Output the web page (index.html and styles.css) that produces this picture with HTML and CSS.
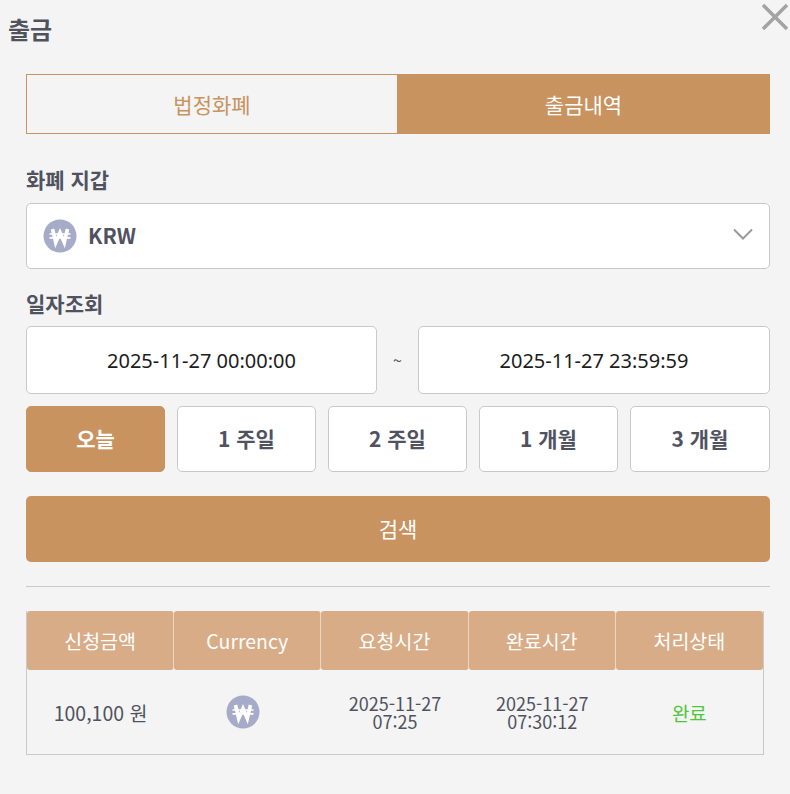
FILE: index.html
```html
<!DOCTYPE html>
<html lang="ko">
<head>
<meta charset="UTF-8">
<meta name="viewport" content="width=device-width, initial-scale=1.0">
<title>출금</title>
<link rel="stylesheet" href="styles.css">
</head>
<body>
    <svg class="defs" width="0" height="0">
        <symbol id="won" viewBox="0 0 34 34">
            <circle cx="17" cy="17" r="16.500" fill="#a6abc8"/>
            <path d="M9.500 10l3.200 13.500 4.300-10 4.300 10 3.200-13.500" fill="none" stroke="#fff" stroke-width="3.600"/>
            <path d="M6.500 15h21M6.500 18.800h21" fill="none" stroke="#fff" stroke-width="1.700"/>
        </symbol>
    </svg>

    <div class="header">
        <h1>출금</h1>
        <svg class="close" width="28" height="28" viewBox="0 0 28 28">
            <path d="M2 2l24 24M26 2L2 26" stroke="#a3a3a3" stroke-width="3.500" fill="none"/>
        </svg>
    </div>

    <div class="content">
        <div class="tabs">
            <div class="tab">법정화폐</div>
            <div class="tab active">출금내역</div>
        </div>

        <div class="label wallet-label">화폐 지갑</div>
        <div class="select">
            <svg class="coin" width="34" height="34"><use href="#won"/></svg>
            <span class="select-text">KRW</span>
            <svg class="chevron" width="20" height="12" viewBox="0 0 20 12">
                <path d="M1 1.500l9 9 9-9" stroke="#9a9a9a" stroke-width="2" fill="none"/>
            </svg>
        </div>

        <div class="label date-label">일자조회</div>
        <div class="dates">
            <div class="date">2025-11-27 00:00:00</div>
            <div class="tilde">~</div>
            <div class="date">2025-11-27 23:59:59</div>
        </div>

        <div class="ranges">
            <button class="range active">오늘</button>
            <button class="range">1 주일</button>
            <button class="range">2 주일</button>
            <button class="range">1 개월</button>
            <button class="range">3 개월</button>
        </div>

        <button class="search">검색</button>

        <hr class="divider">

        <table class="history">
            <thead>
                <tr>
                    <th>신청금액</th>
                    <th>Currency</th>
                    <th>요청시간</th>
                    <th>완료시간</th>
                    <th>처리상태</th>
                </tr>
            </thead>
            <tbody>
                <tr>
                    <td>100,100 원</td>
                    <td><svg class="coin-small" width="34" height="34"><use href="#won"/></svg></td>
                    <td class="time">2025-11-27<br>07:25</td>
                    <td class="time">2025-11-27<br>07:30:12</td>
                    <td class="done">완료</td>
                </tr>
            </tbody>
        </table>
    </div>
</body>
</html>
```

FILE: styles.css
```css
* {
    box-sizing: border-box;
}
body {
    font-family: "Noto Sans CJK KR", "Noto Sans", sans-serif;
    background: #f4f4f4;
    color: #50535f;
    margin: 0;
    padding: 0;
}
.defs {
    display: block;
    height: 0;
}
.header {
    display: flex;
    justify-content: space-between;
    padding: 0 1px 0 8px;
    height: 74px;
}
.header h1 {
    margin: 11px 0 0;
    font-size: 24px;
    line-height: 36px;
    font-weight: 700;
}
.close {
    margin-top: 3px;
}
.content {
    padding: 0 20px 0 26px;
}
.tabs {
    display: grid;
    grid-template-columns: 371px 1fr;
    height: 60px;
}
.tab {
    display: flex;
    align-items: center;
    justify-content: center;
    font-size: 21px;
    color: #c8935f;
    border: 1px solid #c8935f;
    border-right: none;
}
.tab.active {
    background: #c8935f;
    color: #fff;
    border: none;
}
.label {
    font-size: 21px;
    line-height: 28px;
    font-weight: 700;
}
.wallet-label {
    margin-top: 31px;
    height: 38px;
}
.select {
    display: flex;
    align-items: center;
    height: 66px;
    padding: 0 16px;
    background: #fff;
    border: 1px solid #c9c9c9;
    border-radius: 5px;
}
.select-text {
    margin: 0 0 2px 11px;
    font-size: 21px;
    font-weight: 700;
}
.chevron {
    margin: 0 0 4px auto;
}
.date-label {
    margin-top: 20px;
    height: 37px;
}
.dates {
    display: grid;
    grid-template-columns: 351px 41px 1fr;
    align-items: center;
    height: 68px;
}
.date {
    height: 68px;
    padding-top: 1px;
    display: flex;
    align-items: center;
    justify-content: center;
    background: #fff;
    border: 1px solid #c9c9c9;
    border-radius: 5px;
    font-family: "Noto Sans", sans-serif;
    font-size: 20px;
    color: #1c1c1c;
}
.tilde {
    text-align: center;
    font-size: 16px;
}
.ranges {
    display: grid;
    grid-template-columns: repeat(4, 139px) 1fr;
    gap: 12px;
    margin-top: 12px;
}
.range {
    height: 66px;
    background: #fff;
    border: 1px solid #c9c9c9;
    border-radius: 5px;
    font: 700 21px/1 "Noto Sans CJK KR", "Noto Sans", sans-serif;
    color: #50535f;
    padding: 0 0 2px;
}
.range.active {
    background: #c8935f;
    border-color: #c8935f;
    color: #fff;
}
.search {
    display: block;
    width: 100%;
    height: 66px;
    margin-top: 24px;
    background: #c8935f;
    border: none;
    border-radius: 5px;
    font: 400 21px/1 "Noto Sans CJK KR", "Noto Sans", sans-serif;
    color: #fff;
    padding: 0 0 2px;
}
.divider {
    margin: 24px 0;
    border: none;
    border-top: 1px solid #c9c9c9;
}
.history {
    width: 738px;
    table-layout: fixed;
    border-collapse: separate;
    border-spacing: 0;
    border: 1px solid #c9c9c9;
    border-top: none;
    text-align: center;
}
.history th {
    height: 59px;
    padding: 0;
    background: #d8ac87;
    border-right: 1px solid #e9d6c5;
    border-radius: 3px;
    color: #fff;
    font-size: 19.500px;
    font-weight: 400;
}
.history th:last-child {
    border-right: none;
}
.history td {
    height: 84px;
    padding: 0;
    font-size: 19.500px;
    color: #50535f;
}
.coin-small {
    display: block;
    margin: 0 auto 0 52px;
}
.history .time {
    font-size: 18px;
    line-height: 18px;
}
.history .done {
    font-size: 19px;
    color: #4fc63a;
}
```
